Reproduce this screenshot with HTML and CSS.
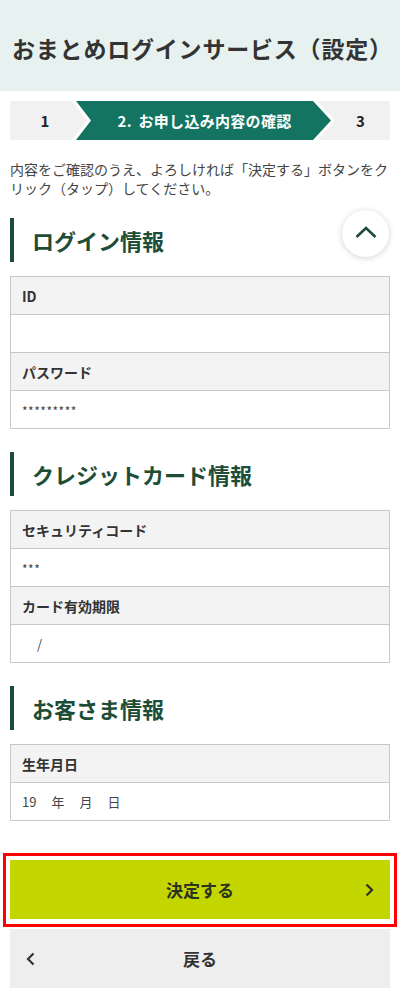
FILE: index.html
```html
<!DOCTYPE html>
<html lang="ja">
<head>
<meta charset="utf-8">
<title>おまとめログインサービス（設定）</title>
<link rel="stylesheet" href="styles.css">
</head>
<body>
<header class="page-header">
  <h1 class="page-title">おまとめログインサービス（設定）</h1>
</header>
<main class="main">
  <ol class="steps">
    <li class="step">1</li>
    <li class="step step-current"><span>2. お申し込み内容の確認</span></li>
    <li class="step">3</li>
  </ol>
  <p class="lead">内容をご確認のうえ、よろしければ「決定する」ボタンをクリック（タップ）してください。</p>

  <button class="to-top" type="button" aria-label="ページの先頭へ">
    <svg width="22" height="12" viewBox="0 0 22 12"><polyline points="1.5,11 11,2 20.5,11" fill="none" stroke="#1d4d36" stroke-width="2.6"/></svg>
  </button>

  <section class="block">
    <h2 class="block-title">ログイン情報</h2>
    <dl class="table">
      <dt class="table-label">ID</dt>
      <dd class="table-value"></dd>
      <dt class="table-label">パスワード</dt>
      <dd class="table-value mask">*********</dd>
    </dl>
  </section>

  <section class="block">
    <h2 class="block-title">クレジットカード情報</h2>
    <dl class="table">
      <dt class="table-label">セキュリティコード</dt>
      <dd class="table-value mask">***</dd>
      <dt class="table-label">カード有効期限</dt>
      <dd class="table-value"><span class="expiry">/</span></dd>
    </dl>
  </section>

  <section class="block">
    <h2 class="block-title">お客さま情報</h2>
    <dl class="table">
      <dt class="table-label">生年月日</dt>
      <dd class="table-value"><span class="date-part">19</span><span class="date-part">年</span><span class="date-part">月</span><span class="date-part">日</span></dd>
    </dl>
  </section>

  <div class="highlight">
    <button class="btn btn-primary" type="button">
      <span class="btn-text">決定する</span>
      <svg class="btn-icon btn-icon-right" width="9" height="14" viewBox="0 0 9 14"><polyline points="1.5,1.5 7,7 1.5,12.5" fill="none" stroke="#2c3320" stroke-width="2.2"/></svg>
    </button>
  </div>
  <button class="btn btn-back" type="button">
    <svg class="btn-icon btn-icon-left" width="9" height="14" viewBox="0 0 9 14"><polyline points="7.5,1.5 2,7 7.5,12.5" fill="none" stroke="#333" stroke-width="2.2"/></svg>
    <span class="btn-text">戻る</span>
  </button>
</main>
</body>
</html>
```
FILE: styles.css
```css
* { box-sizing: border-box; }
html, body { margin: 0; padding: 0; }
body {
  font-family: "Noto Sans CJK JP", "Noto Sans", sans-serif;
  color: #333;
  background: #fff;
  width: 400px;
}
.page-header {
  background: #e7f1f0;
  height: 91px;
  display: flex;
  align-items: center;
  padding: 4px 0 0 12px;
}
.page-title {
  margin: 0;
  font-size: 23px;
  font-weight: 700;
  color: #333;
  letter-spacing: 0.8px;
}
.main {
  position: relative;
  padding-top: 10px;
}
.steps {
  list-style: none;
  margin: 0 10px;
  padding: 0;
  height: 39px;
  background: #f1f1f1;
  display: grid;
  grid-template-columns: 66px 255px 1fr;
}
.step {
  display: flex;
  align-items: center;
  justify-content: center;
  font-size: 15px;
  font-weight: 700;
  color: #222;
}
.step:first-child { padding-left: 4px; }
.step-current {
  position: relative;
  z-index: 0;
  color: #fff;
}
.step-current span { position: relative; padding-left: 2px; letter-spacing: 0.3px; word-spacing: 3px; }
.step-current::before,
.step-current::after {
  content: "";
  position: absolute;
  top: 0;
  bottom: 0;
  clip-path: polygon(0 0, calc(100% - 18px) 0, 100% 50%, calc(100% - 18px) 100%, 0 100%, 15px 50%);
}
.step-current::before {
  left: -4px;
  right: -4px;
  background: #fff;
  z-index: -2;
}
.step-current::after {
  left: 0;
  right: 0;
  background: #137561;
  z-index: -1;
}
.lead {
  margin: 20px 10px 0;
  font-size: 14px;
  line-height: 19px;
  color: #444;
}
.to-top {
  position: absolute;
  top: 119px;
  right: 11px;
  width: 47px;
  height: 47px;
  border-radius: 50%;
  border: none;
  background: #fff;
  box-shadow: 0 1px 6px rgba(0,0,0,0.18);
  display: flex;
  align-items: center;
  justify-content: center;
  padding: 0 0 4px;
}
.block { margin: 0 10px; }
.block-title {
  margin: 20px 0 14px;
  height: 44px;
  border-left: 4px solid #1d4d36;
  padding-left: 18px;
  display: flex;
  align-items: center;
  font-size: 22px;
  font-weight: 700;
  color: #1d4d36;
}
.block + .block .block-title { margin-top: 23px; }
.table {
  margin: 0;
  border: 1px solid #c8c8c8;
  border-bottom: none;
}
.table-label,
.table-value {
  margin: 0;
  height: 38px;
  border-bottom: 1px solid #c8c8c8;
  display: flex;
  align-items: center;
  padding-left: 11px;
}
.table-label {
  background: #f3f3f3;
  font-size: 14px;
  font-weight: 700;
  color: #333;
}
.table-value {
  font-size: 13px;
  color: #444;
}
.mask { font-size: 12px; letter-spacing: 0.5px; padding-top: 2px; }
.expiry { padding-left: 15px; }
.date-part { margin-right: 15px; }
.highlight {
  margin: 32px 3px 0;
  border: 3px solid #f00;
  padding: 4px 4px 5px;
}
.btn {
  position: relative;
  display: flex;
  align-items: center;
  justify-content: center;
  width: 100%;
  height: 59px;
  border: none;
  font-family: inherit;
  font-size: 17px;
  font-weight: 700;
  padding: 0;
}
.btn-primary {
  background: #c4d600;
  color: #2c3320;
}
.btn-back {
  width: calc(100% - 20px);
  margin: 2px 10px 0;
  background: #eeeeee;
  color: #333;
}
.btn-icon { position: absolute; top: 50%; margin-top: -7px; }
.btn-icon-right { right: 16px; }
.btn-icon-left { left: 16px; }
```
